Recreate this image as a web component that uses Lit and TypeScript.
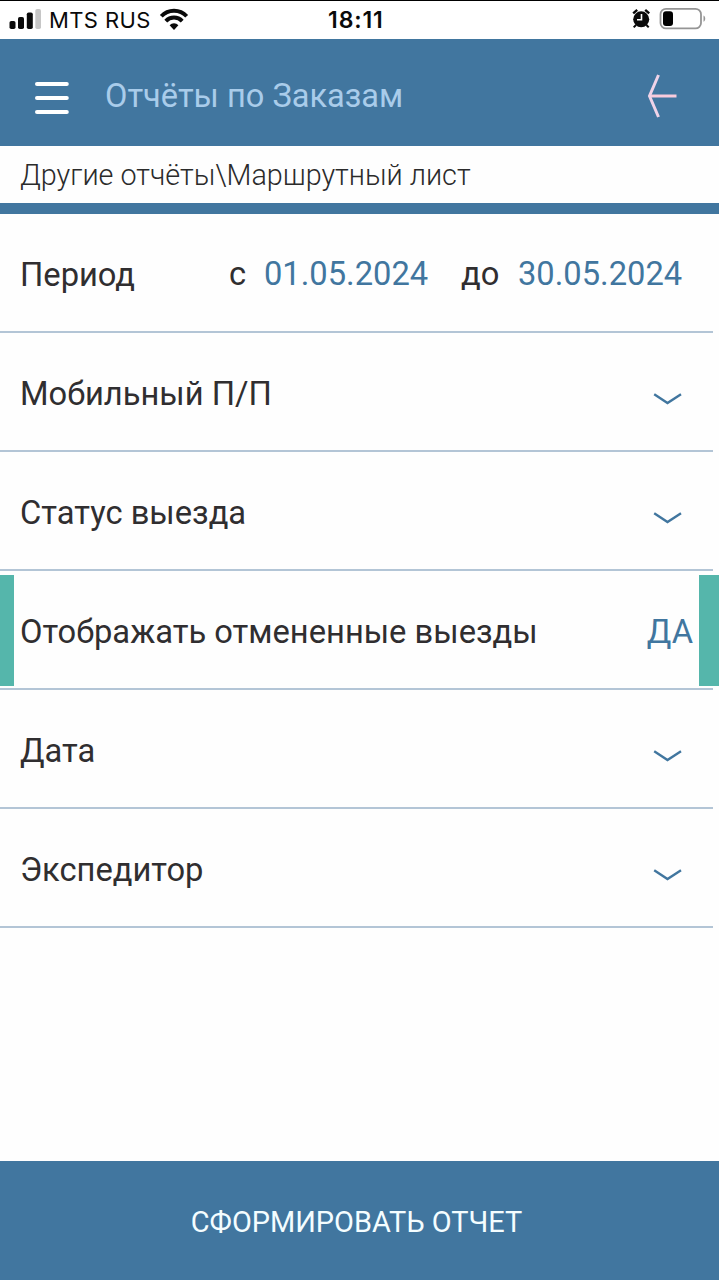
import { LitElement, html, css, svg } from "lit";
import { customElement, property } from "lit/decorators.js";

@customElement("status-bar")
class StatusBar extends LitElement {
  static styles = css`
    :host { display: flex; height: 38px; border-top: 1px solid #000; background: #fff; color: #0a0a0a; font-family: Inter, sans-serif; }
    .side { flex: 1; display: flex; align-items: center; }
    .left { padding-left: 9px; }
    .right { justify-content: flex-end; padding-right: 13px; }
    .carrier { font-size: 22px; line-height: 37px; margin-left: 8px; letter-spacing: 0.4px; width: 110px; white-space: nowrap; }
    .time { font-size: 23px; line-height: 39px; font-weight: 600; letter-spacing: 0.9px; width: 58px; margin-right: 1px; white-space: nowrap; }
    svg { display: block; flex: none; }
  `;
  render() {
    return html`
      <div class="side left">
        <svg width="32" height="38" viewBox="0 0 32 38">
          <rect x="0.5" y="20" width="6" height="8" rx="1.8" fill="#0a0a0a" />
          <rect x="9" y="16" width="6" height="12" rx="1.8" fill="#0a0a0a" />
          <rect x="17.8" y="11.5" width="6" height="16.5" rx="1.8" fill="#0a0a0a" />
          <rect x="26.3" y="8" width="5.7" height="20" rx="1.8" fill="#c6c6c6" />
        </svg>
        <span class="carrier">MTS RUS</span>
        <svg width="30" height="38" viewBox="0 0 30 38">
          <g fill="none" stroke="#0a0a0a" stroke-width="3.9">
            <path d="M2.3 15.3a17.2 17.2 0 0 1 25.4 0" />
            <path d="M6.8 20.1a11.2 11.2 0 0 1 16.4 0" />
          </g>
          <path d="M10.6 24.2a6.2 6.2 0 0 1 8.8 0L15 29z" fill="#0a0a0a" />
        </svg>
      </div>
      <span class="time">18:11</span>
      <div class="side right">
        <svg width="20" height="38" viewBox="0 0 20 38">
          <circle cx="9.2" cy="18.3" r="8" fill="#0a0a0a" />
          <path d="M1.2 12.4l4-3.6M17.2 12.4l-4-3.6" stroke="#0a0a0a" stroke-width="2.4" fill="none" />
          <path d="M4 24l-2.3 2.4M14.4 24l2.3 2.4" stroke="#0a0a0a" stroke-width="2" />
          <path d="M9.5 13v5.8H5" stroke="#fff" stroke-width="1.6" fill="none" />
        </svg>
        <svg width="54" height="38" viewBox="0 0 54 38">
          <rect x="8.5" y="7.8" width="40.5" height="19.6" rx="5.5" fill="none" stroke="#959595" stroke-width="1.8" />
          <rect x="11" y="10.3" width="10" height="14.8" rx="3" fill="#000" />
          <path d="M51.5 14.6c2.3 1 2.3 5.2 0 6.2z" fill="#959595" />
        </svg>
      </div>
    `;
  }
}

@customElement("filter-row")
class FilterRow extends LitElement {
  @property() label = "";
  @property() kind = "select";
  @property() value = "";
  static styles = css`
    :host { display: block; height: 119px; }
    .row { display: flex; height: 117px; align-items: center; box-sizing: border-box; padding-left: 20px; color: #302e30; font-size: 32.7px; line-height: 40px; white-space: nowrap; }
    .label { flex: 1; padding-top: 4px; }
    .line { height: 2px; width: 713px; background: #b3c5d6; }
    .toggle { padding-left: 0; }
    .toggle .label { padding-left: 6px; }
    .mark { width: 14px; height: 111px; background: #55b6ab; align-self: flex-end; margin-bottom: 2px; }
    .mark.end { width: 20px; }
    .answer { color: #41769f; padding: 4px 6px 0 0; }
    .period .label { flex: none; width: 209px; }
    .word { padding-top: 3px; }
    .from { width: 35px; }
    .until { width: 57px; }
    .date { color: #41769f; padding-top: 3px; }
    .start { width: 197px; }
    .chevron { margin: 15px 36px 0 0; flex: none; }
  `;
  render() {
    if (this.kind === "period") {
      const [start, end] = this.value.split(" ");
      return html`<div class="row period">
          <span class="label">${this.label}</span>
          <span class="word from">с</span><span class="date start">${start}</span>
          <span class="word until">до</span><span class="date">${end}</span>
        </div>
        <div class="line"></div>`;
    }
    if (this.kind === "toggle") {
      return html`<div class="row toggle">
          <span class="mark"></span>
          <span class="label">${this.label}</span>
          <span class="answer">${this.value}</span>
          <span class="mark end"></span>
        </div>
        <div class="line"></div>`;
    }
    return html`<div class="row">
        <span class="label">${this.label}</span>
        <svg class="chevron" width="30" height="14" viewBox="0 0 30 14">
          <path d="M1.2 2.2L14.5 11 28 2.2" fill="none" stroke="#41769f" stroke-width="2.4" />
        </svg>
      </div>
      <div class="line"></div>`;
  }
}

const filters = [
  { label: "Период", kind: "period", value: "01.05.2024 30.05.2024" },
  { label: "Мобильный П/П", kind: "select", value: "" },
  { label: "Статус выезда", kind: "select", value: "" },
  { label: "Отображать отмененные выезды", kind: "toggle", value: "ДА" },
  { label: "Дата", kind: "select", value: "" },
  { label: "Экспедитор", kind: "select", value: "" },
];

@customElement("app-root")
class AppRoot extends LitElement {
  static styles = css`
    :host { display: flex; flex-direction: column; width: 719px; height: 1280px; overflow: hidden; background: #fefefe; font-family: Roboto, sans-serif; }
    .header { display: flex; align-items: center; height: 107px; background: #41769f; flex: none; }
    .menu { margin: 10px 0 0 33px; }
    .title { flex: 1; margin: 7px 0 0 36px; color: #a9ccea; font-size: 32.6px; line-height: 40px; font-weight: 400; white-space: nowrap; }
    .back { margin: 6px 40px 0 0; }
    .crumbs { height: 57px; box-sizing: border-box; padding-left: 20px; border-top: 1px solid #fff; font-size: 28.75px; line-height: 57px; font-weight: 300; color: #2b2b2b; white-space: nowrap; flex: none; }
    .band { height: 11px; background: #41769f; flex: none; }
    .list { flex: 1; }
    .submit { height: 119px; flex: none; border: 0; padding: 2px 6px 0 0; background: #41769f; color: #f4fdff; font: 400 28.9px/40px Roboto, sans-serif; text-align: center; }
    svg { display: block; flex: none; }
  `;
  render() {
    return html`
      <status-bar></status-bar>
      <header class="header">
        <svg class="menu" width="36" height="34" viewBox="0 0 36 34">
          ${[3, 17, 31].map((y) => svg`<line x1="4" x2="33.8" y1=${y} y2=${y} stroke="#fff" stroke-width="4" stroke-linecap="round" />`)}
        </svg>
        <span class="title">Отчёты по Заказам</span>
        <svg class="back" width="32" height="46" viewBox="0 0 32 46">
          <path d="M3 23H29.5" stroke="#f9cbdc" stroke-width="3" />
          <path d="M11.5 2L2.5 23l9 21" fill="none" stroke="#efd3e8" stroke-width="3" />
        </svg>
      </header>
      <nav class="crumbs">Другие отчёты\\Маршрутный лист</nav>
      <div class="band"></div>
      <main class="list">
        ${filters.map((f) => html`<filter-row .label=${f.label} .kind=${f.kind} .value=${f.value}></filter-row>`)}
      </main>
      <button class="submit">СФОРМИРОВАТЬ ОТЧЕТ</button>
    `;
  }
}
